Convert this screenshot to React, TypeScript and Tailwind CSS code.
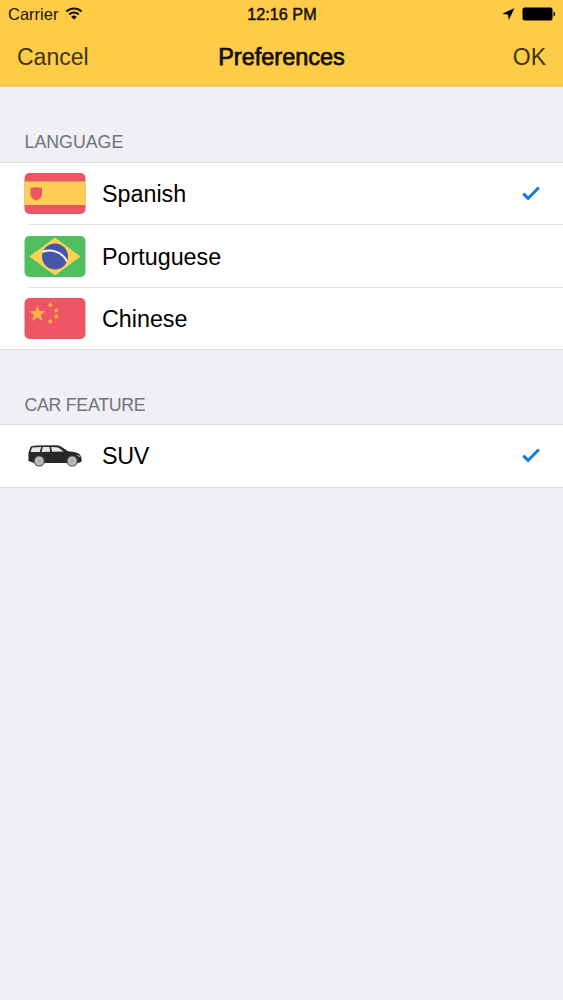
import { useState } from 'react';
import type { ReactNode } from 'react';

function WifiIcon() {
  return (
    <svg width="18" height="14" viewBox="0 0 18 14" fill="none" stroke="#17130a" strokeWidth="2.1">
      <path d="M1.4 4.6a10.7 10.7 0 0 1 15.2 0" />
      <path d="M4.2 7.5a6.8 6.8 0 0 1 9.6 0" />
      <path d="M9 12.7 6.2 9.8a4 4 0 0 1 5.6 0Z" fill="#17130a" stroke="none" />
    </svg>
  );
}

function LocationIcon() {
  return (
    <svg width="13" height="12" viewBox="0 0 13 12">
      <path d="M12.1 0.4 0.8 5.7 6.1 6.5 6.9 11.5Z" fill="#000" stroke="#000" strokeWidth=".3" />
    </svg>
  );
}

function BatteryIcon() {
  return (
    <svg width="34" height="14" viewBox="0 0 34 14">
      <rect x="0.5" y="0.5" width="30" height="13" rx="2" fill="#000" />
      <path d="M31.5 4.5c2.2.8 2.2 4.2 0 5Z" fill="#000" />
    </svg>
  );
}

function CheckIcon() {
  return (
    <svg width="18" height="15" viewBox="0 0 18 15" fill="none" stroke="#0f7ae5" strokeWidth="2.9">
      <path d="M1.3 7.6 6.1 12.4 16.8 1.6" />
    </svg>
  );
}

function SpainFlag() {
  return (
    <svg width="62" height="41" viewBox="-0.5 0 62 41">
      <rect width="61" height="41" rx="5" fill="#ed5565" />
      <path d="M0 8.5h61v23.5H0Z" fill="#ffce54" />
      <path d="M6 14.5q3 .8 5.7-.4 2.7 1.2 5.8.4v7.2q-.7 3.9-5.8 6-5-2.1-5.7-6Z" fill="#ed5565" />
    </svg>
  );
}

function BrazilFlag() {
  return (
    <svg width="62" height="41" viewBox="-0.5 0 62 41">
      <rect width="61" height="41" rx="5" fill="#4fbe5f" />
      <path d="M30.5 1.5 56 20.5 30.5 39.5 5 20.5Z" fill="#fdd155" />
      <circle cx="30.5" cy="20.5" r="13" fill="#4656a8" />
      <path d="M18.2 15.8c10-3.4 20.2 1 24.4 9.8" fill="none" stroke="#fff" strokeWidth="2" />
    </svg>
  );
}

function ChinaFlag() {
  return (
    <svg width="62" height="41" viewBox="-0.5 0 62 41">
      <rect width="61" height="41" rx="5" fill="#ed5565" />
      <g fill="#fdb245">
        <path d="M12.9 7.5 15 13.1 21.2 13.3 16.4 17.1 18.1 23 12.9 19.6 7.7 23 9.4 17.1 4.6 13.3 10.8 13.1Z" />
        <path id="small" d="M25.8 3.9 26.6 5.7 28.5 5.9 27.1 7.2 27.5 9.2 25.8 8.2 24.1 9.2 24.5 7.2 23.1 5.9 25 5.7Z" />
        <use href="#small" x="6" y="5.6" />
        <use href="#small" x="6" y="11.8" />
        <use href="#small" x="0" y="16.5" />
      </g>
    </svg>
  );
}

function SuvIcon() {
  return (
    <svg width="62" height="41" viewBox="-0.5 0 62 41">
      <path
        d="M4 17.5 6.2 11.7Q7.4 10.8 12 10.6l19.5-.3q3 0 4.6.9l7.5 5q9.8.8 12 3.6l1.5 3.4v3.2l-1.7 1.2-3 .4H9.6L4 26Z"
        fill="#27272a"
      />
      <path d="m7.5 12.4 9.2-.4-1.4 4.9-9.2.2Zm10.7-.4 6.9-.1.6 4.9-8.6.1Zm8.5-.1q5.4-.1 7.4.8l5.1 3.9-11.6.2Z" fill="#e7e7e9" />
      <path d="M17 17.2v9M26.8 17.3v8.9" stroke="#3d3d41" strokeWidth=".6" />
      <path d="m51.9 19.5 3.4 1.2.6 1.5-2.9-.9Z" fill="#a9a9ac" />
      <circle cx="14.7" cy="26" r="5.6" fill="#4b4b4e" />
      <circle cx="14.7" cy="26" r="4.5" fill="#bcbcbe" />
      <circle cx="14.7" cy="26" r="1.5" fill="#a2a2a5" />
      <circle cx="47.7" cy="26" r="5.6" fill="#4b4b4e" />
      <circle cx="47.7" cy="26" r="4.5" fill="#bcbcbe" />
      <circle cx="47.7" cy="26" r="1.5" fill="#a2a2a5" />
    </svg>
  );
}

function SectionTitle({ children }: { children: ReactNode }) {
  return <h2 className="pl-[24.5px] text-[17.8px] leading-6 text-[#727277]">{children}</h2>;
}

function Row({
  icon,
  label,
  checked,
  divider,
  onClick,
}: {
  icon: ReactNode;
  label: string;
  checked: boolean;
  divider?: boolean;
  onClick: () => void;
}) {
  return (
    <div>
      <button type="button" onClick={onClick} className="flex h-[61.4px] w-full items-center pr-[23px] pl-6 text-left">
        {icon}
        <span className="ml-4 flex-1 pt-px text-[23.3px] leading-7 text-black">{label}</span>
        {checked && <CheckIcon />}
      </button>
      {divider && <div className="ml-7 h-px bg-[#e4e4e7]" />}
    </div>
  );
}

const LANGUAGES = [
  { label: 'Spanish', icon: <SpainFlag /> },
  { label: 'Portuguese', icon: <BrazilFlag /> },
  { label: 'Chinese', icon: <ChinaFlag /> },
];

export default function App() {
  const [language, setLanguage] = useState('Spanish');
  const [suv, setSuv] = useState(true);

  return (
    <div className="min-h-screen bg-[#efeff4] font-['Liberation_Sans',Arial,sans-serif]">
      <header className="h-[87px] border-b border-[#e5c58d] bg-[#ffcc47]">
        <div className="grid h-7 grid-cols-3 items-center pr-[7px] pl-2 text-[#17130a]">
          <div className="flex items-center gap-[7px] text-[16.5px]">
            <span>Carrier</span>
            <WifiIcon />
          </div>
          <span className="text-center text-[16.2px] [-webkit-text-stroke:0.5px_#17130a]">12:16 PM</span>
          <div className="flex items-center justify-end gap-[7px]">
            <LocationIcon />
            <BatteryIcon />
          </div>
        </div>
        <nav className="grid h-[58px] grid-cols-3 items-center px-[17px] pt-px text-[23.5px]">
          <button type="button" className="text-left text-[23px] text-[#403515]">Cancel</button>
          <h1 className="text-center text-[#140f04] [-webkit-text-stroke:0.75px_#140f04]">Preferences</h1>
          <button type="button" className="text-right text-[23px] text-[#403515]">OK</button>
        </nav>
      </header>

      <main>
        <section className="pt-[43px]">
          <SectionTitle>LANGUAGE</SectionTitle>
          <div className="mt-2 border-y border-[#dcdce0] bg-white">
            {LANGUAGES.map((item, i) => (
              <Row
                key={item.label}
                icon={item.icon}
                label={item.label}
                checked={language === item.label}
                divider={i < LANGUAGES.length - 1}
                onClick={() => setLanguage(item.label)}
              />
            ))}
          </div>
        </section>

        <section className="pt-[43px] tracking-[-0.3px]">
          <SectionTitle>CAR FEATURE</SectionTitle>
          <div className="mt-[7px] border-y border-[#dcdce0] bg-white">
            <Row icon={<SuvIcon />} label="SUV" checked={suv} onClick={() => setSuv(!suv)} />
          </div>
        </section>
      </main>
    </div>
  );
}
